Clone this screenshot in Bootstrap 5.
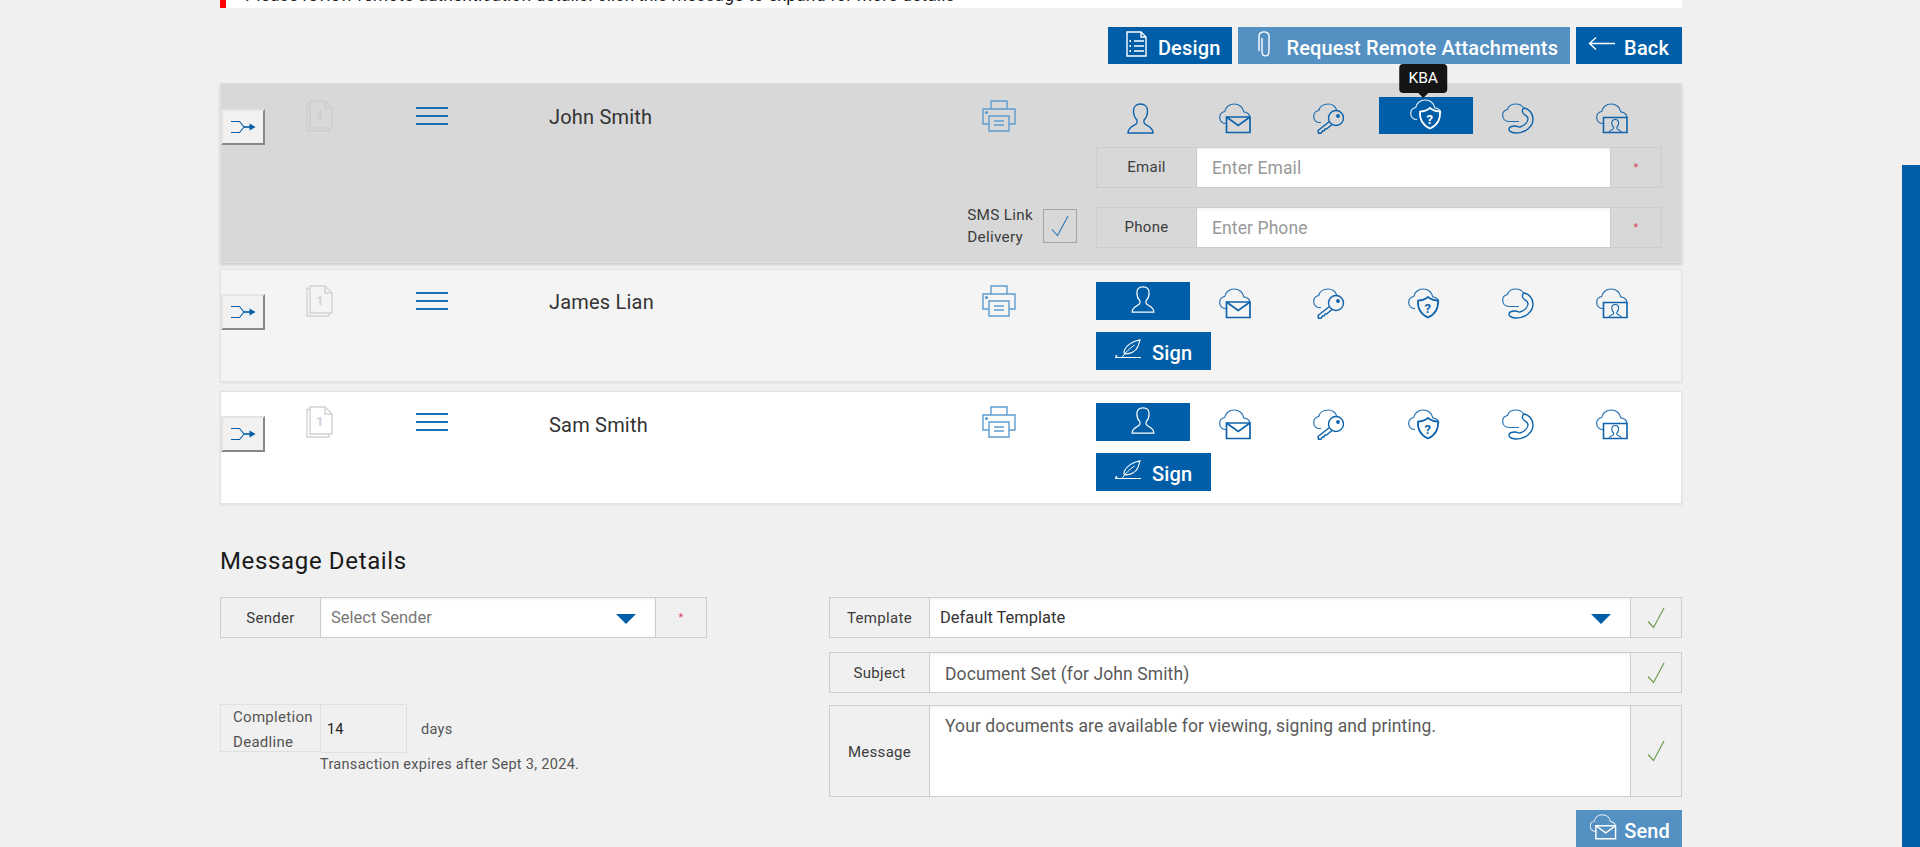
<!DOCTYPE html>
<html lang="en">
<head>
<meta charset="utf-8">
<title>Message Details</title>
<link href="https://cdn.jsdelivr.net/npm/bootstrap@5.3.0/dist/css/bootstrap.min.css" rel="stylesheet">
<style>
html,body{height:847px;overflow:hidden}
body{background:#f0f0f0;font-family:Roboto,"Liberation Sans",sans-serif;color:#333;letter-spacing:.3px}
.page{height:847px}
.main-col{width:1462px;margin-left:220px}
.edge-bar{width:18px;margin-top:165px;background:#005ea8}
.notice{height:8px;background:#fff;border-left:6px solid #f00;overflow:hidden;padding-left:19px;font-size:17.5px;line-height:24px;color:#222;letter-spacing:.1px}
.notice span{display:block;margin-top:-17px;white-space:nowrap}
.actions{margin-top:19px;gap:6px;height:37px}
.act{display:inline-flex;align-items:center;gap:12px;background:#005ea8;border:0;border-radius:0;color:#fff;font-size:20px;font-weight:500;height:37px;padding:4px 12px 0 15px;letter-spacing:.15px}
.act:hover,.act:disabled{background:#005ea8;color:#fff;opacity:1}
.act-soft,.act-soft:hover,.act-soft:disabled{background:#5490c2}
.act .ic{margin-top:-8px}
.act-design{padding-left:18px;gap:11px}
.act-clip{padding-left:20px;gap:16px}
.act-back{padding-left:12px;padding-right:13px;gap:9px}
.ic{fill:none;stroke:currentColor;stroke-width:1.4;flex:none;display:block}
.cl{stroke-width:1.2;opacity:.9}
.signer{display:grid;grid-template-columns:85px 110px 133px 433px 114px 566px;align-content:start;border:1px solid #e2e2e2;box-shadow:0 1px 2px #ddd}
.s-a{margin-top:19px;height:180px;background:#d8d8d8;border-color:#dedede;padding-top:13px;grid-template-rows:37px 41px 41px;row-gap:13px;box-shadow:0 2px 3px #ccc}
.s-b{margin-top:6px;height:113px;background:#f4f4f4;padding-top:12px;grid-template-rows:38px 38px;row-gap:12px}
.s-c{margin-top:9px;height:113px;background:#fff;padding-top:11px;grid-template-rows:38px 38px;row-gap:12px}
.s-a .gphone{margin-top:6px}
.cell-sh{grid-row:1/span 2;padding-top:12px}
.s-c .cell-sh{padding-top:13px}
.cell-doc{grid-row:1/span 2;padding-top:3px;color:#d2d2d2}
.s-a .cell-doc{color:#cdcdcd}
.cell-ham{grid-row:1/span 2;padding-top:10px}
.cell-name{grid-row:1/span 2;padding-top:6px;font-size:20px;letter-spacing:.2px;line-height:28px;color:#333}
.s-c .cell-name{padding-top:8px}
.cell-prt{grid-row:1/span 2;padding-top:3px;color:#5d9ccf}
.tabs{grid-column:6;display:grid;grid-template-columns:repeat(6,1fr)}
.tab{display:flex;align-items:flex-start;justify-content:center;position:relative;color:#0e63ab;padding:6px 5px 0 0}
.tab-on{background:#005ea8;color:#fff;padding:4px 0 0}
.tab-q{padding-top:2px}
.shuf{display:flex;align-items:center;justify-content:center;width:44px;height:36px;background:#f1f1f1;border:2px solid;border-color:#e4e4e4 #888 #888 #e4e4e4;color:#005ea8;padding:0}
.ham{display:block;width:32px;border-top:2px solid #1a70b5;height:8px}
.ham:last-child{height:0}
.tipbox{position:absolute;top:-33px;left:calc(50% - 3px);transform:translateX(-50%);background:#151515;color:#fff;font-size:15.5px;line-height:17px;padding:6px 9px;border-radius:4px;z-index:3;letter-spacing:0;white-space:nowrap}
.tipbox::after{content:"";position:absolute;left:50%;bottom:-5px;margin-left:-5px;border:5px solid transparent;border-bottom:0;border-top-color:#151515}
.sign-btn{grid-column:6;width:115px;padding-left:19px;gap:11px;height:38px}
.grp{flex-wrap:nowrap;height:41px}
.grp .input-group-text,.grp .form-control,.grp .form-select{border-radius:0!important;border:1px solid #cdcdcd;height:100%;margin-left:0!important}
.grp .input-group-text{background:transparent;justify-content:center;font-size:15px;color:#3c3c3c;padding:0}
.lab{width:101px;flex:none}
.add{width:52px;flex:none}
.grp .form-control,.grp .form-select{border-left:0;border-right:0;box-shadow:inset 0 2px 2px #f4f4f4}
.grp .form-control{font-size:17.5px;letter-spacing:.1px;padding:0 15px;color:#5a5a5a;background:#fff}
.grp .form-control::placeholder{color:#999;opacity:1}
.grp .form-select{font-size:16.5px;padding:2px 0 0 10px;color:#777;background:#fff url("data:image/svg+xml,%3Csvg xmlns='http://www.w3.org/2000/svg' viewBox='0 0 20 10'%3E%3Cpath fill='%23005ea8' d='M0 0h20L10 10z'/%3E%3C/svg%3E") no-repeat right 19px top 16px/20px 10px}
.grp .sel-dark{color:#333}
.left-pane .grp .lab,.right-pane .grp .lab,.g-sub .form-control{padding-top:2px}
.star{color:#d9485f;font-size:11px;line-height:1}
.form-area{grid-column:6}
.sms{grid-row:3;grid-column:4/span 2;justify-self:end;margin-right:19px;margin-top:4px;gap:10px;font-size:15.3px;line-height:22px;color:#3c3c3c;height:41px}
.chk{width:34px;height:34px;border:1px solid #a4a4a4;color:#2a78bd;background:#d8d8d8}
.chk .ic{stroke-width:1.1}
.ttl{font-size:24px;font-weight:400;line-height:30px;margin:42px 0 21px;color:#1a1a1a;letter-spacing:.65px}
.left-pane{width:487px}
.right-pane{width:853px}
.dead{margin-top:66px;font-size:15px;color:#555;line-height:25px}
.dlab{width:101px;height:48px;border:1px solid #e0e0e0;padding:0 0 0 12px}
.dval{width:86px;height:49px;border:1px solid #e0e0e0;border-left:0;padding:2px 6px 0;font-size:14.5px;color:#222;line-height:47px;background:transparent}
.dunit{padding-left:14px;line-height:51px;font-size:14.5px}
.dnote{padding-left:100px;font-size:14.5px;color:#555;line-height:20px}
.g-sub{margin-top:14px}
.g-msg{margin-top:12px;height:92px}
.g-msg textarea.form-control{resize:none;padding:8px 15px 0;line-height:24px}
.grp .tick{color:#6f9e50}
.tick .ic{stroke-width:1.2}
.send{margin-top:13px}
.send .act{padding-left:13px;gap:7px}
</style>
</head>
<body>
<svg width="0" height="0" class="position-absolute">
<defs>
<symbol id="cloud" viewBox="0 0 32 31"><path class="cl" d="M7 20.500C3.300 20.500.7 18 .7 14.500c0-3.200 2.300-5.500 5-6C6.500 4.500 10 1 15.200 1c5 0 8.800 3.300 9.600 7.800 3.300.5 5.800 2.700 6 5.200"/></symbol>
<symbol id="i-user" viewBox="0 0 27 31"><path d="M13.500 1C9 1 6.500 4 6.500 8c0 4 1.500 7 3.500 9v2.500C10 22.500 1 23 1 30h25c0-7-9-7.500-9-10.500V17c2-2 3.500-5 3.500-9 0-4-2.500-7-7-7z"/></symbol>
<symbol id="i-mail" viewBox="0 0 32 31"><use href="#cloud"/><path d="M7.500 14h23.500v15.500H7.500z" stroke-width="1.700"/><path d="M7.500 14l11.700 8.500L31 14" stroke-width="1.700"/></symbol>
<symbol id="i-key" viewBox="0 0 32 31"><path class="cl" d="M8 19.500H6.500C3.300 19.500.7 17 .7 13.500c0-3.200 2.300-5.500 5-6C6.500 4 10 1 15.200 1c4 0 7 2 8.500 6"/><circle cx="23" cy="15" r="7.500" fill="none"/><circle cx="25" cy="13" r="1.200" fill="currentColor"/><path d="M16.500 18.500L5 27.500l.5 2.700H8l1.500-2.200H11l1-2h1.500l5.500-4.500"/></symbol>
<symbol id="i-kba" viewBox="0 0 32 31"><use href="#cloud"/><path d="M20 9c3 2.500 6.500 3.500 10 3.500C30.500 20 28 26 20 29.500 12 26 9.500 20 10 12.500 13.500 12.500 17 11.500 20 9z" stroke-width="1.700"/><text x="20" y="24.500" text-anchor="middle" font-family="Roboto,sans-serif" font-size="13" font-weight="700" fill="currentColor" stroke="none">?</text></symbol>
<symbol id="i-phone" viewBox="0 0 32 31"><path class="cl" d="M17 18.500H7C3 18.500.7 15.500.7 12c0-3 2.300-5 4.800-5.500C6.500 3 10 1 14 1c3 0 6 1.500 7.500 4"/><path d="M22.500 5C27 6 31 10.500 31 16c0 8-8 14-16.500 14-4 0-7.500-1.500-7.500-3.500s2.500-3.500 6-3.500c2.500 0 3.500 1.500 5 1 4.500-1.500 8-5 8-8.500 0-3-5-3.500-5.500-6.500-.3-2 .5-4 2-4z" stroke-width="1.400"/></symbol>
<symbol id="i-vid" viewBox="0 0 32 31"><use href="#cloud"/><path d="M7.500 14.500h23.500v15H7.500z" stroke-width="1.600"/><path d="M19.200 16.500c-2.300 0-3.400 1.600-3.400 3.500 0 1.800.9 3.400 1.800 4.300v1.200c0 1.300-4.600 1.200-4.600 4h12.400c0-2.800-4.600-2.700-4.600-4v-1.200c.9-.9 1.800-2.500 1.800-4.300 0-1.900-1.100-3.500-3.400-3.500z" stroke-width="1.100"/></symbol>
<symbol id="i-doc" viewBox="0 0 27 32"><path d="M4 3.500H1V31h22v-3"/><path d="M4 1h15l7 7v20H4z"/><path d="M19 1v7h7"/><text x="14" y="20" text-anchor="middle" font-family="Roboto,sans-serif" font-size="13" font-weight="700" fill="currentColor" stroke="none">1</text></symbol>
<symbol id="i-prt" viewBox="0 0 34 32"><path d="M9 9V1h16v8"/><path d="M7 24H1V9h32v15h-6"/><path d="M7 16h20v15H7z"/><path d="M12 21h10M12 25h10" stroke-width="1.600"/><circle cx="4.500" cy="12.500" r=".9" fill="currentColor"/></symbol>
<symbol id="i-shuf" viewBox="0 0 26 14"><path d="M1 1.500h8.500L14 7l-4.500 5.500H1" stroke-width="1.100"/><path d="M14 7h6" stroke-width="1.600"/><path d="M19.500 3.500L25.500 7l-6 3.500z" fill="currentColor" stroke="none"/></symbol>
<symbol id="i-design" viewBox="0 0 21 26"><path d="M1 1h14l5 5v19H1z"/><path d="M15 1v5h5"/><path d="M8 10h10M8 15h10M8 20h10"/><path d="M3.500 10h1.500M3.500 15h1.500M3.500 20h1.500" stroke-width="2"/></symbol>
<symbol id="i-clip" viewBox="0 0 12 26"><path d="M4 7v13c0 6.500 7 6.500 7 0V5C11 -.5 1 -.5 1 5v15"/></symbol>
<symbol id="i-back" viewBox="0 0 27 15"><path d="M27 7.500H2M8 1.500L1.500 7.500 8 13.500"/></symbol>
<symbol id="i-pen" viewBox="0 0 26 20"><path d="M25 .8C18 2.500 12 5 9.500 11c-.7 1.700-.5 3.200.3 3.800 5 .5 11-2 13-7 1-2.300 1.500-5 2.200-7z" stroke-width="1.100"/><path d="M7 18.500c3-5 8-9.500 12.500-12.500M0 18.500h26" stroke-width="1"/><circle cx="1.300" cy="17" r="1" fill="currentColor" stroke="none"/></symbol>
<symbol id="i-check" viewBox="0 0 18 22"><path d="M1 14.500l5.500 6L17 1"/></symbol>
</defs>
</svg>
<div class="page d-flex">
<main class="main-col">
  <div class="notice"><span>Please review remote authentication details. click this message to expand for more details</span></div>
  <div class="actions d-flex justify-content-end">
    <button class="btn act act-design" type="button"><svg class="ic" width="21" height="26"><use href="#i-design"/></svg>Design</button>
    <button class="btn act act-soft act-clip" type="button"><svg class="ic" width="12" height="26"><use href="#i-clip"/></svg>Request Remote Attachments</button>
    <button class="btn act act-back" type="button"><svg class="ic" width="27" height="15"><use href="#i-back"/></svg>Back</button>
  </div>

  <section class="signer s-a">
    <div class="cell-sh"><button class="shuf" type="button"><svg class="ic" width="26" height="14"><use href="#i-shuf"/></svg></button></div>
    <div class="cell-doc"><svg class="ic" width="27" height="32"><use href="#i-doc"/></svg></div>
    <div class="cell-ham"><span class="ham"></span><span class="ham"></span><span class="ham"></span></div>
    <div class="cell-name">John Smith</div>
    <div class="cell-prt"><svg class="ic" width="34" height="32"><use href="#i-prt"/></svg></div>
    <div class="tabs">
      <a class="tab"><svg class="ic" width="27" height="31"><use href="#i-user"/></svg></a>
      <a class="tab"><svg class="ic" width="32" height="31"><use href="#i-mail"/></svg></a>
      <a class="tab"><svg class="ic" width="32" height="31"><use href="#i-key"/></svg></a>
      <a class="tab tab-on tab-q"><span class="tipbox">KBA</span><svg class="ic" width="32" height="31"><use href="#i-kba"/></svg></a>
      <a class="tab"><svg class="ic" width="32" height="31"><use href="#i-phone"/></svg></a>
      <a class="tab"><svg class="ic" width="32" height="31"><use href="#i-vid"/></svg></a>
    </div>
    <div class="form-area input-group grp">
      <span class="input-group-text lab">Email</span>
      <input class="form-control" type="text" placeholder="Enter Email">
      <span class="input-group-text add"><span class="star">*</span></span>
    </div>
    <div class="sms d-flex align-items-center"><span>SMS Link<br>Delivery</span><span class="chk d-flex align-items-center justify-content-center"><svg class="ic" width="18" height="22"><use href="#i-check"/></svg></span></div>
    <div class="form-area input-group grp gphone">
      <span class="input-group-text lab">Phone</span>
      <input class="form-control" type="text" placeholder="Enter Phone">
      <span class="input-group-text add"><span class="star">*</span></span>
    </div>
  </section>

  <section class="signer s-b">
    <div class="cell-sh"><button class="shuf" type="button"><svg class="ic" width="26" height="14"><use href="#i-shuf"/></svg></button></div>
    <div class="cell-doc"><svg class="ic" width="27" height="32"><use href="#i-doc"/></svg></div>
    <div class="cell-ham"><span class="ham"></span><span class="ham"></span><span class="ham"></span></div>
    <div class="cell-name">James Lian</div>
    <div class="cell-prt"><svg class="ic" width="34" height="32"><use href="#i-prt"/></svg></div>
    <div class="tabs">
      <a class="tab tab-on"><svg class="ic" width="24" height="27"><use href="#i-user"/></svg></a>
      <a class="tab"><svg class="ic" width="32" height="31"><use href="#i-mail"/></svg></a>
      <a class="tab"><svg class="ic" width="32" height="31"><use href="#i-key"/></svg></a>
      <a class="tab"><svg class="ic" width="32" height="31"><use href="#i-kba"/></svg></a>
      <a class="tab"><svg class="ic" width="32" height="31"><use href="#i-phone"/></svg></a>
      <a class="tab"><svg class="ic" width="32" height="31"><use href="#i-vid"/></svg></a>
    </div>
    <button class="btn act sign-btn" type="button"><svg class="ic" width="26" height="20"><use href="#i-pen"/></svg>Sign</button>
  </section>

  <section class="signer s-c">
    <div class="cell-sh"><button class="shuf" type="button"><svg class="ic" width="26" height="14"><use href="#i-shuf"/></svg></button></div>
    <div class="cell-doc"><svg class="ic" width="27" height="32"><use href="#i-doc"/></svg></div>
    <div class="cell-ham"><span class="ham"></span><span class="ham"></span><span class="ham"></span></div>
    <div class="cell-name">Sam Smith</div>
    <div class="cell-prt"><svg class="ic" width="34" height="32"><use href="#i-prt"/></svg></div>
    <div class="tabs">
      <a class="tab tab-on"><svg class="ic" width="24" height="27"><use href="#i-user"/></svg></a>
      <a class="tab"><svg class="ic" width="32" height="31"><use href="#i-mail"/></svg></a>
      <a class="tab"><svg class="ic" width="32" height="31"><use href="#i-key"/></svg></a>
      <a class="tab"><svg class="ic" width="32" height="31"><use href="#i-kba"/></svg></a>
      <a class="tab"><svg class="ic" width="32" height="31"><use href="#i-phone"/></svg></a>
      <a class="tab"><svg class="ic" width="32" height="31"><use href="#i-vid"/></svg></a>
    </div>
    <button class="btn act sign-btn" type="button"><svg class="ic" width="26" height="20"><use href="#i-pen"/></svg>Sign</button>
  </section>

  <h2 class="ttl">Message Details</h2>
  <div class="d-flex justify-content-between">
    <div class="left-pane">
      <div class="input-group grp">
        <span class="input-group-text lab">Sender</span>
        <select class="form-select"><option>Select Sender</option></select>
        <span class="input-group-text add"><span class="star">*</span></span>
      </div>
      <div class="dead d-flex align-items-start">
        <div class="dlab">Completion<br>Deadline</div>
        <input class="dval" type="text" value="14">
        <div class="dunit">days</div>
      </div>
      <div class="dnote">Transaction expires after Sept 3, 2024.</div>
    </div>
    <div class="right-pane">
      <div class="input-group grp">
        <span class="input-group-text lab">Template</span>
        <select class="form-select sel-dark"><option>Default Template</option></select>
        <span class="input-group-text add tick"><svg class="ic" width="18" height="22"><use href="#i-check"/></svg></span>
      </div>
      <div class="input-group grp g-sub">
        <span class="input-group-text lab">Subject</span>
        <input class="form-control" type="text" value="Document Set (for John Smith)">
        <span class="input-group-text add tick"><svg class="ic" width="18" height="22"><use href="#i-check"/></svg></span>
      </div>
      <div class="input-group grp g-msg">
        <span class="input-group-text lab">Message</span>
        <textarea class="form-control">Your documents are available for viewing, signing and printing.</textarea>
        <span class="input-group-text add tick"><svg class="ic" width="18" height="22"><use href="#i-check"/></svg></span>
      </div>
      <div class="send d-flex justify-content-end">
        <button class="btn act act-soft" type="button"><svg class="ic" width="28" height="26"><use href="#i-mail"/></svg>Send</button>
      </div>
    </div>
  </div>
</main>
<aside class="edge-bar ms-auto"></aside>
</div>
</body>
</html>
